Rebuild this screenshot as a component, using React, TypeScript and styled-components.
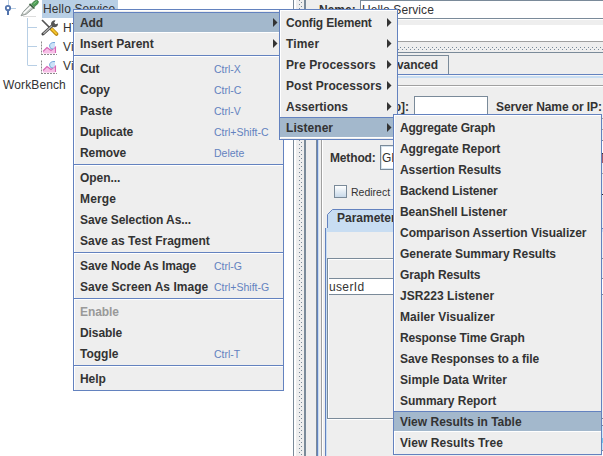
import React from "react";
import styled, { createGlobalStyle, css } from "styled-components";

const BLUE = "#6382bf";
const STEEL = "#7a8a99";
const GRAY = "#eeeeee";

const Global = createGlobalStyle`
  body { margin: 0; overflow: hidden; }
  * { box-sizing: border-box; }
`;

const Window = styled.div`
  position: relative;
  display: flex;
  width: 603px;
  height: 456px;
  overflow: hidden;
  background: ${GRAY};
  color: #333;
  font: 12px/15px "Liberation Sans", Arial, sans-serif;
  white-space: nowrap;
`;

/* ---------- tree ---------- */
const Tree = styled.div`
  width: 294px;
  background: #fff;
  border-right: 1px solid ${STEEL};
  display: flex;
  flex-direction: column;
`;
const TreeBody = styled.div`
  display: flex;
  height: 76px;
`;
const TreeArt = styled.svg`
  display: block;
  flex: none;
`;
const Nodes = styled.div`
  display: flex;
  flex-direction: column;
`;
const Node = styled.div<{ $selected?: boolean; $indent?: number }>`
  height: 19px;
  padding-top: 2px;
  margin-left: ${(p) => p.$indent ?? 0}px;
  letter-spacing: 0.12px;
  ${(p) =>
    p.$selected &&
    css`
      width: 76px;
      height: 18px;
      margin-bottom: 1px;
      padding: 2px 0 0 1px;
      background: #b8cfe5;
    `}
`;

/* ---------- splitters ---------- */
const Divider = styled.div`
  width: 12px;
  border-left: 2px solid #fff;
  border-right: 2px solid ${STEEL};
  background:
    repeating-linear-gradient(to bottom, ${STEEL} 0 1px, transparent 1px 4px) 3px 0 / 1px 100% no-repeat,
    repeating-linear-gradient(to bottom, transparent 0 2px, ${STEEL} 2px 3px, transparent 3px 4px) 5px 0 / 1px 100% no-repeat,
    ${GRAY};
`;
const HDivider = styled.div`
  height: 11px;
  border-top: 1px solid #a0a0a0;
  background:
    repeating-linear-gradient(to right, ${STEEL} 0 1px, transparent 1px 4px) 0 5px / 100% 1px no-repeat,
    repeating-linear-gradient(to right, transparent 0 2px, ${STEEL} 2px 3px, transparent 3px 4px) 0 7px / 100% 1px no-repeat,
    ${GRAY};
`;

/* ---------- request editor ---------- */
const Editor = styled.div`
  flex: 1;
  display: flex;
  flex-direction: column;
  padding-left: 10px;
  min-width: 0;
`;
const Bold = styled.span<{ $ls?: number }>`
  font-weight: bold;
  letter-spacing: ${(p) => p.$ls ?? 0}px;
`;
const NameRow = styled.div`
  display: flex;
  height: 25px;
  padding-left: 3px;
`;
const NameLabel = styled(Bold)`
  width: 41px;
  padding-top: 3px;
`;
const NameField = styled.div`
  flex: 1;
  height: 19px;
  padding: 2px 0 0 1px;
  background: #fff;
  border: solid ${STEEL};
  border-width: 1px 0 1px 1px;
  box-shadow: 0 1px #fff;
  letter-spacing: 0.1px;
`;
const Comments = styled.div`
  height: 16px;
  margin-left: 44px;
  background: #fff;
`;
const TabBar = styled.div`
  height: 23px;
  padding: 3px 0 0 60px;
  border-top: 1px solid ${STEEL};
  border-bottom: 1px solid ${BLUE};
  display: flex;
`;
const AdvancedTab = styled.div`
  width: 73px;
  height: 19px;
  margin-top: -1px;
  padding: 2px 10px 0 0;
  display: flex;
  justify-content: flex-end;
  border: solid ${STEEL};
  border-width: 1px 1px 0 0;
`;
const Sheet = styled.div`
  flex: 1;
  display: flex;
  flex-direction: column;
  border-top: 1px solid #f6f6f6;
  border-left: 1px solid ${STEEL};
`;
const SheetInner = styled.div`
  flex: 1;
  display: flex;
  flex-direction: column;
  border-left: 1px solid ${BLUE};
`;
const SheetBody = styled.div`
  flex: 1;
  display: flex;
  flex-direction: column;
  border-top: 2px solid #c8ddf2;
  border-left: 1px solid #c8ddf2;
  padding: 7px 0 0 2px;
`;
const Group = styled.div`
  flex: 1;
  display: flex;
  flex-direction: column;
  border-top: 1px solid #a0a0a0;
  border-left: 1px solid #a0a0a0;
  box-shadow: inset 1px 1px #fff;
  padding-left: 3px;
`;
const ServerRow = styled.div`
  display: flex;
  height: 59px;
  padding-top: 10px;
`;
const ServerLabel = styled(Bold)`
  display: flex;
  justify-content: flex-end;
  padding: 4px 5px 0 0;
  width: 89px;
`;
const PathField = styled.div`
  width: 74px;
  height: 22px;
  margin-right: 7px;
  background: #fff;
  border: 1px solid ${STEEL};
`;
const HostLabel = styled(Bold)`
  padding: 4px 0 0 1px;
`;
const MethodRow = styled.div`
  display: flex;
  height: 40px;
  padding-left: 5px;
`;
const MethodLabel = styled(Bold)`
  width: 50px;
  padding-top: 6px;
`;
const Combo = styled.div`
  width: 90px;
  height: 25px;
  padding: 5px 1px;
  background: #fff;
  border: 1px solid ${STEEL};
  box-shadow: inset 0 0 0 1px #d5e3ee;
`;
const CheckRow = styled.div`
  display: flex;
  height: 24px;
  padding-left: 9px;
  font-size: 10.5px;
  line-height: 14px;
`;
const Check = styled.div`
  width: 13px;
  height: 13px;
  margin-right: 4px;
  border: 1px solid ${STEEL};
  background: linear-gradient(#fff, #c8d9e9);
`;
const TabTop = styled.div`
  display: flex;
  height: 19px;
  padding-left: 2px;
`;
const TabEdge = styled.svg`
  flex: none;
  display: block;
`;
const TabFace = styled.div`
  flex: 1;
  height: 19px;
  padding: 1px 0 0 4px;
  border-top: 1px solid ${BLUE};
  background: #c8ddf2;
`;
const Params = styled.div`
  flex: 1;
  border-left: 1px solid ${BLUE};
  box-shadow: inset 1px 0 #c8ddf2;
`;
const ParamStrip = styled.div`
  height: 4px;
  margin-left: 1px;
  background: #c8ddf2;
`;
const Table = styled.div`
  height: 161px;
  margin: 26px 0 0 1px;
  border: 1px solid ${STEEL};
  box-shadow: inset 1px 1px #fff, 0 1px #fff;
  padding-left: 1px;
`;
const TableHead = styled.div`
  height: 20px;
  border-bottom: 1px solid ${STEEL};
`;
const TableRow = styled.div`
  height: 16px;
  padding-top: 1px;
  background: #fff;
  border-bottom: 1px solid ${STEEL};
  letter-spacing: 0.35px;
`;

/* ---------- menus ---------- */
const Menu = styled.div<{ $x: number; $y: number; $w: number }>`
  position: absolute;
  left: ${(p) => p.$x}px;
  top: ${(p) => p.$y}px;
  width: ${(p) => p.$w}px;
  padding: 2px 0 1px;
  background: ${GRAY};
  border: 1px solid ${BLUE};
  box-shadow: inset 1px 1px #fff;
`;
const Item = styled.div<{ $active?: boolean; $disabled?: boolean }>`
  display: flex;
  align-items: flex-start;
  height: 21px;
  padding: 2px 0 0 6px;
  border: solid transparent;
  border-width: 1px 0;
  line-height: 16px;
  font-weight: bold;
  color: ${(p) => (p.$disabled ? "#999" : "#333")};
  ${(p) =>
    p.$active &&
    css`
      background: #a3b8cc;
      border-top-color: ${BLUE};
      border-bottom-color: #fff;
    `}
`;
const Text = styled.span<{ $ls: number }>`
  letter-spacing: ${(p) => p.$ls}px;
`;
const Shortcut = styled.span`
  width: 69px;
  margin-left: auto;
  font-size: 10.5px;
  font-weight: normal;
  color: ${BLUE};
`;
const Arrow = styled.svg`
  margin: 3px 5px 0 auto;
  flex: none;
`;
const Rule = styled.div`
  height: 4px;
  border: solid transparent;
  border-width: 1px 0;
  background: linear-gradient(${BLUE} 50%, #fff 50%) padding-box;
`;

type Entry = { t: string; k?: string; sub?: boolean; on?: boolean; off?: boolean; rule?: boolean; ls?: number };

const main: Entry[] = [
  { t: "Add", sub: true, on: true, ls: -0.1 },
  { t: "Insert Parent", sub: true, rule: true, ls: 0.03 },
  { t: "Cut", k: "Ctrl-X", ls: -0.3 },
  { t: "Copy", k: "Ctrl-C", ls: 0 },
  { t: "Paste", k: "Ctrl-V", ls: 0.1 },
  { t: "Duplicate", k: "Ctrl+Shift-C", ls: -0.1 },
  { t: "Remove", k: "Delete", rule: true, ls: -0.1 },
  { t: "Open...", ls: -0.05 },
  { t: "Merge", ls: 0.15 },
  { t: "Save Selection As...", ls: -0.1 },
  { t: "Save as Test Fragment", rule: true, ls: 0 },
  { t: "Save Node As Image", k: "Ctrl-G", ls: -0.08 },
  { t: "Save Screen As Image", k: "Ctrl+Shift-G", rule: true, ls: 0.03 },
  { t: "Enable", off: true, ls: -0.1 },
  { t: "Disable", ls: -0.08 },
  { t: "Toggle", k: "Ctrl-T", rule: true, ls: 0 },
  { t: "Help", ls: -0.05 },
];
const add: Entry[] = [
  { t: "Config Element", sub: true, ls: -0.17 },
  { t: "Timer", sub: true, ls: 0.15 },
  { t: "Pre Processors", sub: true, ls: 0.12 },
  { t: "Post Processors", sub: true, ls: 0.06 },
  { t: "Assertions", sub: true, ls: 0 },
  { t: "Listener", sub: true, on: true, ls: 0.05 },
];
const listeners: Entry[] = [
  { t: "Aggregate Graph", ls: -0.2 },
  { t: "Aggregate Report", ls: -0.07 },
  { t: "Assertion Results", ls: -0.05 },
  { t: "Backend Listener", ls: -0.16 },
  { t: "BeanShell Listener", ls: -0.05 },
  { t: "Comparison Assertion Visualizer", ls: -0.03 },
  { t: "Generate Summary Results", ls: -0.03 },
  { t: "Graph Results", ls: -0.13 },
  { t: "JSR223 Listener", ls: 0.05 },
  { t: "Mailer Visualizer", ls: 0.05 },
  { t: "Response Time Graph", ls: -0.13 },
  { t: "Save Responses to a file", ls: -0.07 },
  { t: "Simple Data Writer", ls: 0.03 },
  { t: "Summary Report", ls: -0.03 },
  { t: "View Results in Table", on: true, ls: 0 },
  { t: "View Results Tree", ls: 0.07 },
];

function MenuItems({ entries }: { entries: Entry[] }) {
  return (
    <>
      {entries.map((e) => (
        <React.Fragment key={e.t}>
          <Item $active={e.on} $disabled={e.off}>
            <Text $ls={e.ls ?? 0}>{e.t}</Text>
            {e.k && <Shortcut>{e.k}</Shortcut>}
            {e.sub && (
              <Arrow width="5" height="9" viewBox="0 0 5 9">
                <path d="M0 0V9L4.5 4.5Z" fill="#333" />
              </Arrow>
            )}
          </Item>
          {e.rule && <Rule />}
        </React.Fragment>
      ))}
    </>
  );
}

/* Parts of the form that show past the right side of the listener menu. */
const Slivers = styled.div`
  position: absolute;
  left: 602px;
  top: 114px;
  width: 1px;
  display: flex;
  flex-direction: column;
`;
const Sliver = styled.i<{ $h: number; $c: string }>`
  height: ${(p) => p.$h}px;
  background: ${(p) => p.$c};
`;
const edge: [number, string][] = [
  [4, GRAY], [1, "#a0a0a0"], [10, GRAY], [1, "#a0a0a0"], [10, GRAY], [1, STEEL],
  [12, "#fff"], [1, "#333"], [9, "#a55b68"], [10, GRAY], [1, "#a0a0a0"], [20, GRAY],
  [1, "#222"], [33, GRAY], [1, BLUE], [3, "#c8ddf2"], [26, GRAY], [1, STEEL], [19, GRAY],
  [1, STEEL], [15, "#fff"], [1, STEEL], [123, GRAY], [1, STEEL], [6, GRAY], [1, STEEL],
  [12, "#d2edfa"], [5, "#72c7ef"], [7, "#c1e6f8"], [1, STEEL], [6, "#fff"],
];

function TreeIcons() {
  return (
    <TreeArt width="42" height="76" viewBox="0 0 42 76">
      <path d="M8.5 0V5M11 8.5H16M27.5 18V65.5M28 27.5H37M28 46.5H37M28 65.5H37" stroke="#b8cfe5" fill="none" />
      <path d="M8 10V15" stroke="#5374ad" strokeWidth="2" />
      <circle cx="8" cy="8" r="2.2" fill="#fff" stroke="#5374ad" strokeWidth="1.8" />
      <path d="M21 15.8L23.5 11.5L30 4.8L33.5 8L26.5 14Z" fill="#c5ccc8" stroke="#8b938e" strokeWidth=".9" />
      <path d="M23.5 13.5L31 6.5" stroke="#fff" strokeWidth="1.6" />
      <path d="M29.5 3.8L34.5 8.5" stroke="#3c6440" strokeWidth="1.7" />
      <path d="M31.5 4L34.5 1Q37-0.6 38.2 1Q39 3 36.5 5L34.2 6.8Z" fill="#4d9e55" stroke="#35703b" strokeWidth=".7" />
      <path d="M33.5 4L36.5 1.5" stroke="#8bcb8c" />
      <path d="M23 16.5H36" stroke="#ddd" />
    </TreeArt>
  );
}

const NodeIcon = styled.svg`
  flex: none;
  position: absolute;
  left: 41px;
  top: 19px;
`;

function ChildIcons() {
  return (
    <NodeIcon width="20" height="57" viewBox="0 0 20 57">
      <path d="M1 1L10 10" stroke="#555" strokeWidth="1.7" />
      <path d="M10.5 10L15.5 15" stroke="#b8860f" strokeWidth="3.8" strokeLinecap="round" />
      <path d="M10.5 9.8L15.3 14.6" stroke="#f5c52e" strokeWidth="2" strokeLinecap="round" />
      <path d="M2 15L12.5 5.5" stroke="#454545" strokeWidth="3" strokeLinecap="round" />
      <path d="M2.3 14.7L12.5 5.5" stroke="#b5b5b5" strokeWidth="1.2" />
      <path d="M14.5 1.5A3.5 3.5 0 1 0 17 4.5L14.5 5.2L13 4Z" fill="#555" />
      {[0, 19].map((dy) => (
        <g key={dy} transform={`translate(0 ${dy})`}>
          <path d="M0.5 22.5V36M0 35.5H16" stroke="#8a8a8a" strokeDasharray="2 1" fill="none" />
          <path d="M2 34V32L6 28.5L10 31L14 28V34.5H2Z" fill="#f6bfe6" />
          <path d="M2 32.5L6 28.5L10 31.5L14.5 28V34" stroke="#d667b6" fill="none" strokeWidth="1.1" />
          <path d="M14 23.5Q9 23 8.5 27Q9 30.5 12 30L14 28Z" fill="#cce2f8" />
          <path d="M14 23.5Q9 23 8.5 27Q9 30.5 12 30" stroke="#76a8dc" fill="none" />
        </g>
      ))}
    </NodeIcon>
  );
}

export default function App() {
  return (
    <Window>
      <Global />
      <Tree>
        <TreeBody>
          <TreeIcons />
          <Nodes>
            <Node $selected>Hello Service</Node>
            <Node $indent={21}>HTTP</Node>
            <Node $indent={21}>View</Node>
            <Node $indent={21}>View</Node>
          </Nodes>
        </TreeBody>
        <Node $indent={3}>WorkBench</Node>
      </Tree>
      <ChildIcons />
      <Divider />
      <Editor>
        <NameRow>
          <NameLabel>Name:</NameLabel>
          <NameField>Hello Service</NameField>
        </NameRow>
        <Comments />
        <HDivider />
        <TabBar>
          <AdvancedTab>
            <Bold $ls={-0.05}>Advanced</Bold>
          </AdvancedTab>
        </TabBar>
        <Sheet>
          <SheetInner>
            <SheetBody>
              <Group>
                <ServerRow>
                  <ServerLabel>[http]:</ServerLabel>
                  <PathField />
                  <HostLabel $ls={-0.08}>Server Name or IP:</HostLabel>
                </ServerRow>
                <MethodRow>
                  <MethodLabel $ls={-0.15}>Method:</MethodLabel>
                  <Combo>GET</Combo>
                </MethodRow>
                <CheckRow>
                  <Check />
                  Redirect
                </CheckRow>
                <TabTop>
                  <TabEdge width="6" height="19" viewBox="0 0 6 19">
                    <path d="M0.5 19V5.5L5.5 0.5H6V19Z" fill="#c8ddf2" />
                    <path d="M0.5 19V5.5L5.5 0.5H6" fill="none" stroke={BLUE} />
                  </TabEdge>
                  <TabFace>
                    <Bold>Parameters</Bold>
                  </TabFace>
                </TabTop>
                <Params>
                  <ParamStrip />
                  <Table>
                    <TableHead />
                    <TableRow>userId</TableRow>
                  </Table>
                </Params>
              </Group>
            </SheetBody>
          </SheetInner>
        </Sheet>
      </Editor>
      <Slivers>
        {edge.map(([h, c], i) => (
          <Sliver key={i} $h={h} $c={c} />
        ))}
      </Slivers>
      <Menu $x={73} $y={9} $w={211}>
        <MenuItems entries={main} />
      </Menu>
      <Menu $x={279} $y={9} $w={119}>
        <MenuItems entries={add} />
      </Menu>
      <Menu $x={393} $y={114} $w={209}>
        <MenuItems entries={listeners} />
      </Menu>
    </Window>
  );
}
